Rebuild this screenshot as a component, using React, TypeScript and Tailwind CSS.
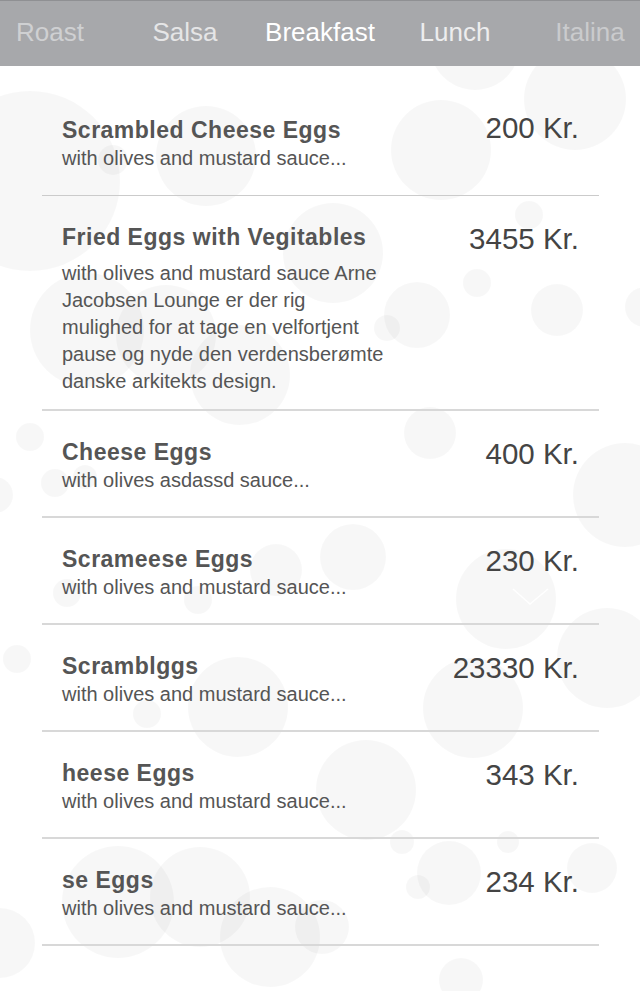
import React from 'react';

type Item = { title: string; desc: string; price: string; kind: 'first' | 'long' | 'short' };

const items: Item[] = [
  { title: 'Scrambled Cheese Eggs', desc: 'with olives and mustard sauce...', price: '200 Kr.', kind: 'first' },
  {
    title: 'Fried Eggs with Vegitables',
    desc: 'with olives and mustard sauce Arne Jacobsen Lounge er der rig mulighed for at tage en velfortjent pause og nyde den verdensberømte danske arkitekts design.',
    price: '3455 Kr.',
    kind: 'long',
  },
  { title: 'Cheese Eggs', desc: 'with olives asdassd sauce...', price: '400 Kr.', kind: 'short' },
  { title: 'Scrameese Eggs', desc: 'with olives and mustard sauce...', price: '230 Kr.', kind: 'short' },
  { title: 'Scramblggs', desc: 'with olives and mustard sauce...', price: '23330 Kr.', kind: 'short' },
  { title: 'heese Eggs', desc: 'with olives and mustard sauce...', price: '343 Kr.', kind: 'short' },
  { title: 'se Eggs', desc: 'with olives and mustard sauce...', price: '234 Kr.', kind: 'short' },
];

const circles: [number, number, number][] = [
  [30, 181, 90], [206, 156, 50], [113, 160, 15], [475, 45, 45], [575, 99, 51], [441, 150, 50],
  [529, 215, 14], [333, 253, 50], [477, 283, 14], [557, 310, 26], [417, 315, 33], [387, 328, 13],
  [645, 307, 20], [87, 330, 57], [166, 335, 50], [240, 375, 50], [30, 437, 14], [55, 483, 14],
  [85, 477, 12], [-5, 495, 18], [430, 433, 26], [625, 495, 52], [276, 570, 26], [67, 593, 14],
  [198, 600, 14], [17, 659, 14], [147, 714, 14], [238, 707, 50], [353, 557, 33], [506, 599, 50],
  [607, 658, 50], [473, 708, 50], [366, 790, 50], [118, 902, 56], [200, 897, 50], [270, 937, 50],
  [0, 943, 35], [402, 842, 12], [449, 873, 32], [418, 887, 12], [508, 842, 11], [592, 868, 25],
  [461, 980, 22], [322, 927, 27],
];

const tabs = [
  { label: 'Roast', cls: 'w-[135px] text-center text-[#cfd0d2]' },
  { label: 'Salsa', cls: 'w-[135px] text-center text-[#e5e5e6]' },
  { label: 'Breakfast', cls: 'w-[135px] text-center text-white' },
  { label: 'Lunch', cls: 'w-[135px] text-center text-[#ededee]' },
  { label: 'Italina', cls: 'w-[135px] text-center text-[#cacbcd]' },
];

function MenuRow({ item }: { item: Item }) {
  const rowCls =
    item.kind === 'first'
      ? 'flex items-start justify-between border-b border-[#cbcbcb] px-5 pt-[27px] pb-[23px]'
      : item.kind === 'long'
      ? 'flex items-start justify-between border-b-2 border-[#d8d8d8] px-5 pt-[27px] pb-[14px]'
      : 'flex items-start justify-between border-b-2 border-[#d8d8d8] px-5 pt-[27px] pb-[22px]';
  const descCls =
    item.kind === 'long'
      ? 'mt-[9px] text-[20px] leading-[27px] text-[#555555]'
      : 'mt-[1px] text-[20px] leading-[27px] text-[#555555]';
  const priceCls =
    item.kind === 'first'
      ? 'mt-[-2px] whitespace-nowrap text-[29.5px] leading-[28px] text-[#444444]'
      : 'mt-[2px] whitespace-nowrap text-[29.5px] leading-[28px] text-[#444444]';
  return (
    <div className={rowCls}>
      <div className="max-w-[326px]">
        <div className="text-[23px] font-bold leading-[28px] tracking-[0.5px] text-[#555555]">{item.title}</div>
        <div className={descCls}>{item.desc}</div>
      </div>
      <div className={priceCls}>{item.price}</div>
    </div>
  );
}

export default function App() {
  return (
    <div className="relative h-[991px] w-[640px] overflow-hidden bg-white font-['Liberation_Sans',Arial,sans-serif]">
      <svg className="pointer-events-none absolute inset-0" width="640" height="991" viewBox="0 0 640 991">
        {circles.map(([cx, cy, r], i) => (
          <circle key={i} cx={cx} cy={cy} r={r} fill="#000" fillOpacity={0.03} />
        ))}
        <polyline points="513,589 530,604 548,589" fill="none" stroke="#ffffff" strokeWidth={1.6} />
      </svg>

      <header className="relative z-10 flex h-[66px] items-start overflow-hidden border-t border-[#8f9093] bg-[#a7a8ab] pt-[16px]">
        <div className="ml-[-17.5px] flex shrink-0 text-[26px] leading-[30px]">
          {tabs.map((t) => (
            <div key={t.label} className={t.cls}>
              {t.label}
            </div>
          ))}
        </div>
      </header>

      <main className="relative ml-[42px] w-[557px] pt-[23px]">
        {items.map((it) => (
          <MenuRow key={it.title} item={it} />
        ))}
      </main>
    </div>
  );
}
